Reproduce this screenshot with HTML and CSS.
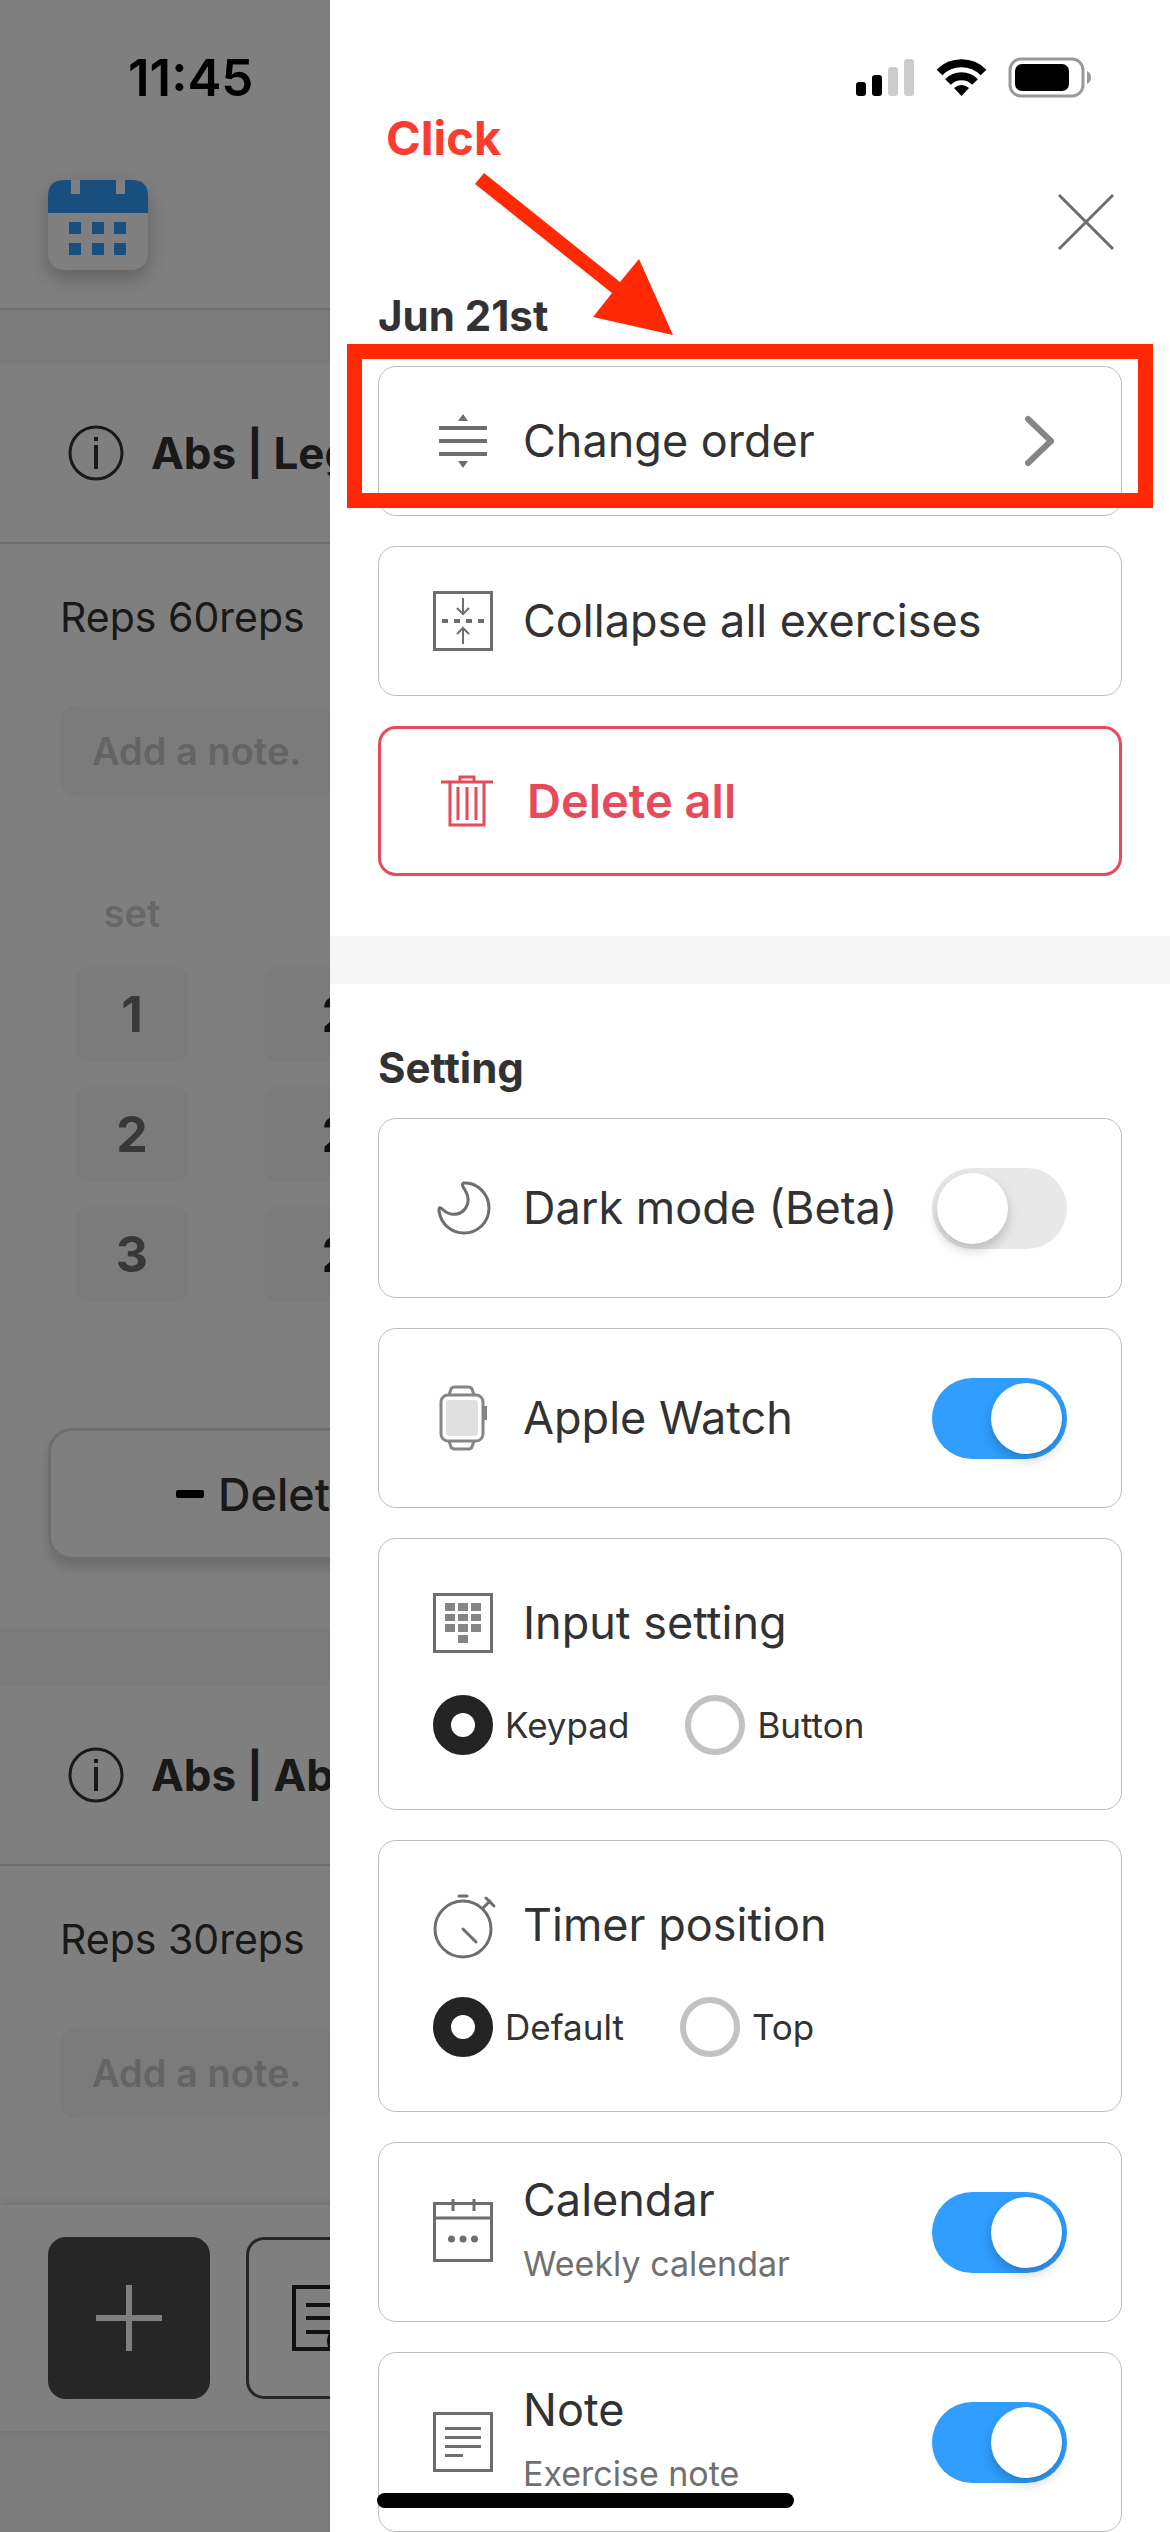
FILE: index.html
```html
<!DOCTYPE html>
<html lang="en">
<head>
    <meta charset="UTF-8">
    <meta name="viewport" content="width=device-width, initial-scale=1.0">
    <title>Workout Settings</title>
    <link rel="stylesheet" href="styles.css">
</head>
<body>
    <main class="page">
        <header class="page-header">
            <time class="clock">11:45</time>
            <button class="calendar-btn" aria-label="Open calendar">
                <svg width="100" height="90" viewBox="0 0 100 90">
                    <path d="M0 33V16Q0 0 16 0H23V14H32V0H68V14H77V0H84Q100 0 100 16V33Z" fill="#309fff"/>
                    <g fill="#309fff">
                        <rect x="21" y="42" width="12" height="12"/>
                        <rect x="44" y="42" width="12" height="12"/>
                        <rect x="66" y="42" width="12" height="12"/>
                        <rect x="21" y="63" width="12" height="12"/>
                        <rect x="44" y="63" width="12" height="12"/>
                        <rect x="66" y="63" width="12" height="12"/>
                    </g>
                </svg>
            </button>
        </header>

        <section class="exercise">
            <div class="exercise-title">
                <svg width="54" height="54" viewBox="0 0 54 54" fill="none" stroke="#323232">
                    <circle cx="27" cy="27" r="26" stroke-width="3"/>
                    <path d="M27 19V43M27 11V15" stroke-width="4"/>
                </svg>
                <h2>Abs | Leg Raise</h2>
            </div>
            <div class="exercise-body">
                <p class="reps">Reps 60reps</p>
                <input class="note" type="text" placeholder="Add a note." aria-label="Leg raise note">
                <table class="sets">
                    <thead>
                        <tr><th>set</th><th>reps</th></tr>
                    </thead>
                    <tbody>
                        <tr><td><span class="set-no">1</span></td><td><span class="set-reps">20</span></td></tr>
                        <tr><td><span class="set-no">2</span></td><td><span class="set-reps">20</span></td></tr>
                        <tr><td><span class="set-no">3</span></td><td><span class="set-reps">20</span></td></tr>
                    </tbody>
                </table>
            </div>
            <button class="delete-set"><span class="minus"></span>Delete set</button>
        </section>

        <section class="exercise">
            <div class="exercise-title">
                <svg width="54" height="54" viewBox="0 0 54 54" fill="none" stroke="#323232">
                    <circle cx="27" cy="27" r="26" stroke-width="3"/>
                    <path d="M27 19V43M27 11V15" stroke-width="4"/>
                </svg>
                <h2>Abs | Ab Crunch</h2>
            </div>
            <div class="exercise-body">
                <p class="reps">Reps 30reps</p>
                <input class="note" type="text" placeholder="Add a note." aria-label="Ab crunch note">
            </div>
        </section>

        <nav class="bottom-bar">
            <button class="add-btn" aria-label="Add exercise">
                <svg width="66" height="66" viewBox="0 0 66 66" stroke="#fff" stroke-width="6"><path d="M0 33H66M33 0V66"/></svg>
            </button>
            <button class="memo-btn" aria-label="Write memo">
                <svg width="66" height="66" viewBox="0 0 66 66" fill="none" stroke="#222" stroke-width="4">
                    <path d="M42 64H2V2H64V36M14 20H52M14 33H52M14 47H42"/>
                    <circle cx="50" cy="56" r="13" fill="#222"/>
                </svg>
            </button>
        </nav>
    </main>

    <div class="overlay"></div>

    <aside class="drawer">
        <div class="status-icons">
            <svg width="236" height="42" viewBox="0 0 236 42">
                <rect x="0" y="25" width="10" height="14" rx="3"/>
                <rect x="16" y="18" width="10" height="21" rx="3"/>
                <rect x="32" y="10" width="10" height="29" rx="3" fill="#ccc"/>
                <rect x="48" y="2" width="10" height="37" rx="3" fill="#ccc"/>
                <g fill="none" stroke="#000" stroke-width="8">
                    <path d="M83.500 15.500A31 31 0 0 1 127.500 15.500"/>
                    <path d="M92 25A19 19 0 0 1 119 25"/>
                </g>
                <path d="M98 31Q105.500 25 113 31L105.500 39Z"/>
                <rect x="154" y="2" width="73" height="37" rx="11" fill="none" stroke="#999" stroke-width="3"/>
                <rect x="159" y="7" width="54" height="27" rx="7"/>
                <path d="M231 14Q235 16 235 20.500Q235 25 231 27Z" fill="#999"/>
            </svg>
        </div>
        <div class="close-row">
            <button class="close" aria-label="Close menu">
                <svg width="60" height="60" viewBox="0 0 60 60" stroke="#6e6e6e" stroke-width="3"><path d="M3 3L57 57M57 3L3 57"/></svg>
            </button>
        </div>

        <section class="section">
            <h1 class="heading">Jun 21st</h1>
            <div class="highlight-wrap">
                <button class="card">
                    <svg class="icon" viewBox="0 0 60 60" stroke="#6e6e6e" stroke-width="4" fill="#6e6e6e">
                        <path d="M6 17H54M6 30H54M6 43H54"/>
                        <path d="M30 3L35 10H25ZM30 57L35 50H25Z" stroke="none"/>
                    </svg>
                    <span class="label">Change order</span>
                    <svg class="chevron" width="30" height="50" viewBox="0 0 30 50" fill="none" stroke="#858585" stroke-width="6" stroke-linecap="round" stroke-linejoin="round"><path d="M3 3L26 25L3 47"/></svg>
                </button>
                <div class="highlight"></div>
            </div>
            <button class="card">
                <svg class="icon" viewBox="0 0 60 60" fill="none" stroke="#6e6e6e">
                    <rect x="1.500" y="1.500" width="57" height="57" stroke-width="3"/>
                    <path d="M9 30H15M21 30H27M33 30H39M45 30H51" stroke-width="4"/>
                    <path d="M30 7V23M24 17L30 23L36 17M30 53V37M24 43L30 37L36 43" stroke-width="2"/>
                </svg>
                <span class="label">Collapse all exercises</span>
            </button>
            <button class="card danger">
                <svg class="icon" viewBox="0 0 60 60" fill="none" stroke="#e64b5b" stroke-width="3">
                    <path d="M6 11H58M25 11V6H39V11M15 11V54H49V11M23 16V49M32 16V49M41 16V49"/>
                </svg>
                <span class="label">Delete all</span>
            </button>
        </section>

        <section class="section">
            <h1 class="heading">Setting</h1>

            <label class="card tall">
                <svg class="icon" viewBox="0 0 60 60" fill="none" stroke="#6e6e6e" stroke-width="3" stroke-linejoin="round">
                    <path d="M31 5C28 6 30 9 32 12C40 25 31 38 18 36C13 35 10 32 8 30C6 29 6 31 6 33C8 46 18 55 31 55C45 55 56 44 56 30C56 16 44 4 31 5Z"/>
                </svg>
                <span class="label">Dark mode (Beta)</span>
                <input class="toggle" type="checkbox">
            </label>

            <label class="card tall">
                <svg class="icon" viewBox="0 3 60 60" fill="none" stroke="#858585" stroke-width="3">
                    <path d="M16 10L18 4Q19 2 22 2H35Q38 2 39 4L41 10M16 56L18 62Q19 64 22 64H35Q38 64 39 62L41 56"/>
                    <rect x="8" y="10" width="42" height="46" rx="7"/>
                    <rect x="13" y="15" width="32" height="36" rx="3" fill="#e0e0e0" stroke="none"/>
                    <path d="M52 21V35" stroke-width="4"/>
                </svg>
                <span class="label">Apple Watch</span>
                <input class="toggle" type="checkbox" checked>
            </label>

            <div class="card choice" role="radiogroup" aria-labelledby="inputLabel">
                <div class="choice-title">
                    <svg class="icon" viewBox="0 0 60 60" fill="#858585">
                        <rect x="1.500" y="1.500" width="57" height="57" fill="none" stroke="#6e6e6e" stroke-width="3"/>
                        <path d="M12 10H22V18H12ZM25 10H35V18H25ZM38 10H48V18H38ZM12 21H22V28H12ZM25 21H35V28H25ZM38 21H48V28H38ZM12 31H22V39H12ZM25 31H35V39H25ZM38 31H48V39H38ZM25 42H35V50H25Z"/>
                    </svg>
                    <span class="label" id="inputLabel">Input setting</span>
                </div>
                <div class="options">
                    <label class="option"><input type="radio" name="input" checked>Keypad</label>
                    <label class="option"><input type="radio" name="input">Button</label>
                </div>
            </div>

            <div class="card choice" role="radiogroup" aria-labelledby="timerLabel">
                <div class="choice-title">
                    <svg class="icon" viewBox="0 0 60 60" fill="none" stroke="#6e6e6e" stroke-width="3" stroke-linecap="round">
                        <circle cx="30" cy="34" r="28"/>
                        <path d="M26 1H34M30 34L43 47M50 13L57 6M53 3L61 11"/>
                    </svg>
                    <span class="label" id="timerLabel">Timer position</span>
                </div>
                <div class="options">
                    <label class="option"><input type="radio" name="timer" checked>Default</label>
                    <label class="option"><input type="radio" name="timer">Top</label>
                </div>
            </div>

            <label class="card tall">
                <svg class="icon" viewBox="0 0 60 60" fill="none" stroke="#6e6e6e" stroke-width="3">
                    <path d="M1.500 1.500H58.500V58.500H1.500ZM1.500 16H58.500M20 -3V9M41 -3V9"/>
                    <g fill="#6e6e6e" stroke="none"><circle cx="18.500" cy="37" r="3.500"/><circle cx="30" cy="37" r="3.500"/><circle cx="41.500" cy="37" r="3.500"/></g>
                </svg>
                <span class="label">Calendar<small>Weekly calendar</small></span>
                <input class="toggle" type="checkbox" checked>
            </label>

            <label class="card tall">
                <svg class="icon" viewBox="0 0 60 60" fill="none" stroke="#6e6e6e" stroke-width="3">
                    <path d="M1.500 1.500H58.500V58.500H1.500ZM12 16.500H48M12 25.500H48M12 34.500H48M12 43.500H30"/>
                </svg>
                <span class="label">Note<small>Exercise note</small></span>
                <input class="toggle" type="checkbox" checked>
            </label>
        </section>

        <!-- tutorial hint drawn over the menu -->
        <strong class="hint-text">Click</strong>
        <svg class="hint-arrow" width="200" height="164" viewBox="0 0 200 164" fill="#ff2a05"><path d="M10 0L146 109L165 86L199 162L119 144L138 120L1 11Z"/></svg>
    </aside>

    <div class="home-indicator"></div>
</body>
</html>
```
FILE: styles.css
```css
* {
    box-sizing: border-box;
}

body {
    font-family: 'Inter', 'Liberation Sans', sans-serif;
    margin: 0;
    position: relative;
    height: 100vh;
    overflow: hidden;
    color: #323232;
    background-color: #fff;
}

button, input {
    font-family: inherit;
    color: inherit;
}

h1, h2, p {
    margin: 0;
}

svg {
    display: block;
    flex-shrink: 0;
    overflow: visible;
}

/* workout page behind the menu */
.page {
    display: flex;
    flex-direction: column;
    height: 100%;
    background-color: #f6f6f6;
}

.page-header {
    height: 310px;
    padding: 48px 48px 0;
    background: #fff;
    border-bottom: 2px solid #e2e2e2;
    display: flex;
    flex-direction: column;
    align-items: flex-start;
    gap: 72px;
}

.clock {
    font-size: 51px;
    line-height: 60px;
    font-weight: 600;
    color: #000;
    margin-left: 80px;
}

.calendar-btn {
    padding: 0;
    border: none;
    border-radius: 16px;
    background: #fff;
    box-shadow: 0 8px 20px rgba(0, 0, 0, 0.25);
}

.exercise {
    margin-top: 54px;
    background: #fff;
}

.exercise + .exercise {
    margin-top: 58px;
}

.exercise-title {
    display: flex;
    align-items: center;
    gap: 28px;
    height: 180px;
    padding: 0 69px;
    border-bottom: 2px solid #dcdcdc;
}

.exercise-title h2 {
    font-size: 44px;
    font-weight: 700;
    white-space: nowrap;
}

.exercise-body {
    padding: 43px 60px 0;
}

.reps {
    font-size: 41px;
    line-height: 60px;
}

.note {
    display: block;
    width: 100%;
    height: 92px;
    margin: 58px 0 86px;
    padding: 0 32px;
    border: none;
    border-radius: 16px;
    background: #f7f7f7;
    font-size: 38px;
    font-weight: 600;
}

.note::placeholder {
    color: #c8c8c8;
    opacity: 1;
}

.sets {
    border-collapse: collapse;
    margin-left: 16px;
}

.sets th {
    height: 71px;
    padding: 0 0 11px;
    color: #cfcfcf;
    font-size: 38px;
    font-weight: 600;
}

.sets td {
    height: 120px;
    padding: 0 76px 0 0;
}

.sets th:first-child {
    padding-right: 76px;
}

.set-no, .set-reps {
    display: block;
    width: 112px;
    border-radius: 12px;
    background: #f7f7f7;
    font-size: 50px;
    line-height: 95px;
    font-weight: 700;
    text-align: center;
    color: #707070;
}

.set-reps {
    width: 180px;
    color: #222;
}

.delete-set {
    display: flex;
    align-items: center;
    gap: 14px;
    width: calc(100% - 96px);
    height: 132px;
    margin: 114px 48px 68px;
    padding: 0 125px;
    border: 3px solid #dcdcdc;
    border-radius: 24px;
    background: #fff;
    box-shadow: 0 8px 12px rgba(0, 0, 0, 0.15);
    font-size: 45px;
    font-weight: 500;
}

.minus {
    width: 28px;
    height: 8px;
    border-radius: 2px;
    background: #000;
}

.bottom-bar {
    display: flex;
    gap: 36px;
    flex-shrink: 0;
    margin-top: auto;
    margin-bottom: 101px;
    padding: 32px 48px;
    background: #fff;
    box-shadow: 0 -2px 8px rgba(0, 0, 0, 0.12);
}

.add-btn, .memo-btn {
    display: flex;
    align-items: center;
    height: 162px;
    border: 3px solid #4c4c4c;
    border-radius: 18px;
}

.add-btn {
    width: 162px;
    justify-content: center;
    background: #4c4c4c;
}

.memo-btn {
    flex: 1;
    padding: 0 43px;
    background: #fff;
}

.overlay {
    position: absolute;
    inset: 0;
    background: rgba(0, 0, 0, 0.5);
}

/* side menu */
.drawer {
    position: absolute;
    inset: 0 0 0 330px;
    overflow: hidden;
    background: #fff;
}

.status-icons {
    display: flex;
    justify-content: flex-end;
    padding: 57px 78px 0;
}

.close-row {
    display: flex;
    justify-content: flex-end;
    padding: 93px 54px 0;
}

.close {
    padding: 0;
    border: none;
    background: none;
}

.section {
    display: flex;
    flex-direction: column;
    gap: 30px;
    padding: 34px 48px 60px;
}

.section + .section {
    padding-top: 54px;
    border-top: 48px solid #f6f6f6;
}

.heading {
    font-size: 42px;
    line-height: 60px;
    font-weight: 700;
    margin-bottom: -10px;
}

.card {
    display: flex;
    align-items: center;
    gap: 30px;
    width: 100%;
    height: 150px;
    padding: 0 54px;
    border: 1px solid #bebebe;
    border-radius: 18px;
    background: #fff;
    text-align: left;
}

.card.tall {
    height: 180px;
}

.card.danger {
    gap: 32px;
    border: 3px solid #e64b5b;
    color: #e64b5b;
}

.danger .label {
    font-size: 47px;
    font-weight: 600;
}

.icon {
    width: 60px;
    height: 60px;
}

.label {
    flex: 1;
    font-size: 45px;
    line-height: 60px;
    white-space: nowrap;
}

.label small {
    display: block;
    margin-top: 4px;
    font-size: 34px;
    color: #707070;
}

.highlight-wrap {
    position: relative;
}

.highlight {
    position: absolute;
    inset: -22px -31px 8px;
    border: 15px solid #ff2a05;
}

.chevron {
    margin-right: 12px;
}

.toggle {
    appearance: none;
    display: flex;
    flex-shrink: 0;
    width: 135px;
    height: 81px;
    margin: 0;
    padding: 5px;
    border-radius: 41px;
    background: #e8e8e8;
}

.toggle::before {
    content: '';
    width: 71px;
    height: 71px;
    border-radius: 50%;
    background: #fff;
    box-shadow: 0 6px 12px rgba(0, 0, 0, 0.2);
}

.toggle:checked {
    justify-content: flex-end;
    background: #309dff;
}

.card.choice {
    flex-direction: column;
    align-items: stretch;
    gap: 42px;
    height: auto;
    padding: 54px;
}

.choice-title {
    display: flex;
    gap: 30px;
}

.options {
    display: flex;
    gap: 56px;
}

.option {
    display: flex;
    align-items: center;
    gap: 12px;
    font-size: 35px;
}

.option input {
    appearance: none;
    width: 60px;
    height: 60px;
    margin: 0;
    border: 6px solid #c2c2c2;
    border-radius: 50%;
}

.option input:checked {
    border: 18px solid #242424;
}

.hint-text {
    position: absolute;
    top: 108px;
    left: 56px;
    font-size: 47px;
    line-height: 60px;
    color: #fc3c30;
}

.hint-arrow {
    position: absolute;
    top: 173px;
    left: 144px;
}

.home-indicator {
    position: absolute;
    bottom: 24px;
    left: 50%;
    width: 417px;
    height: 15px;
    margin-left: -208px;
    border-radius: 8px;
    background: #000;
}
```
